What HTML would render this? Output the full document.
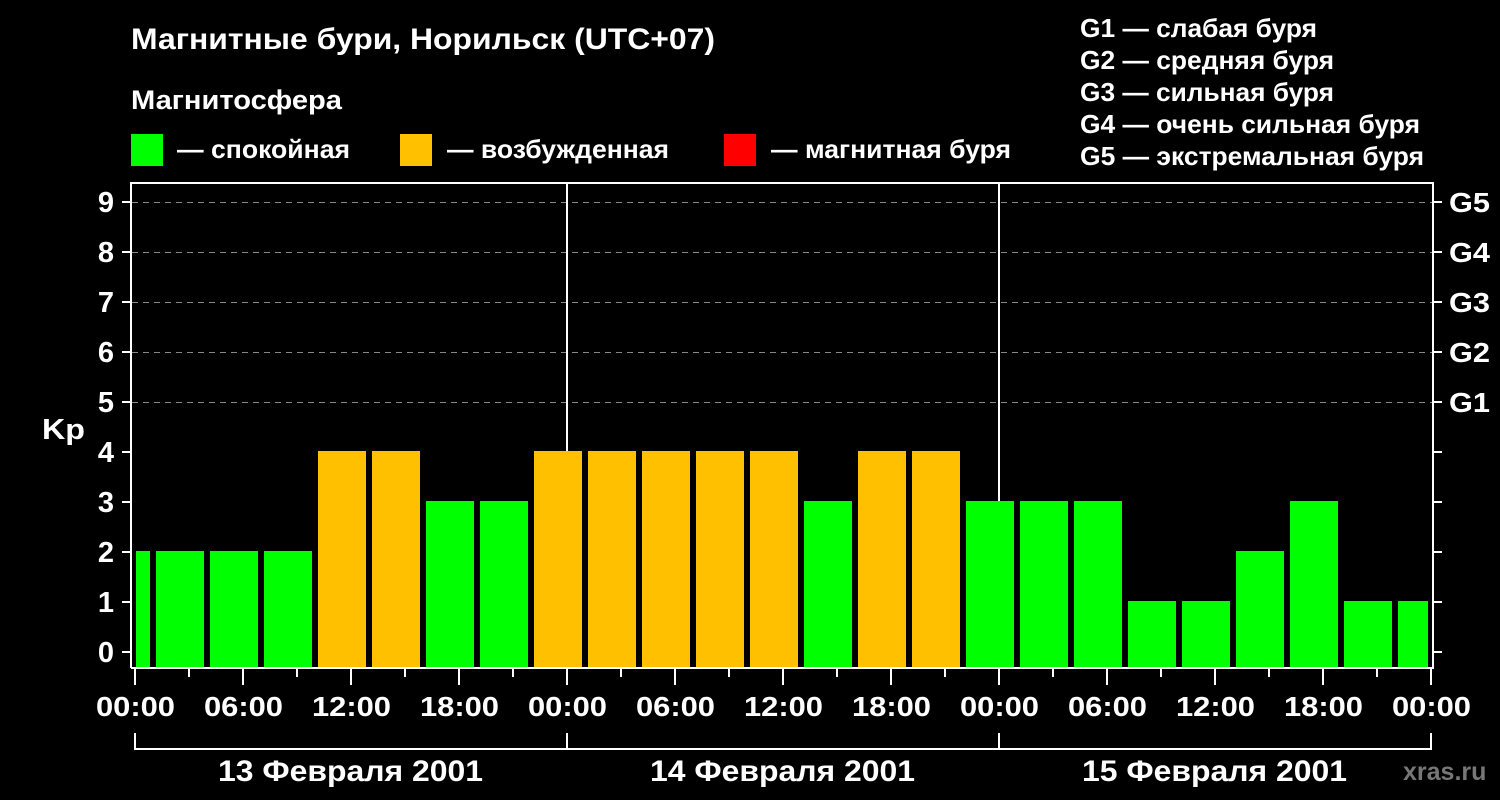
<!DOCTYPE html>
<html><head><meta charset="utf-8"><style>
html,body{margin:0;padding:0;background:#000;}
svg{display:block;font-family:"Liberation Sans",Arial,sans-serif;font-weight:bold;}
</style></head><body>
<svg width="1500" height="800" viewBox="0 0 1500 800" xmlns="http://www.w3.org/2000/svg">
<rect width="1500" height="800" fill="#000"/>
<g fill="#fff">
<text x="131" y="49" font-size="30" textLength="584" lengthAdjust="spacingAndGlyphs">Магнитные бури, Норильск (UTC+07)</text>
<text x="131" y="109" font-size="27" textLength="211" lengthAdjust="spacingAndGlyphs">Магнитосфера</text>
<text x="177" y="158" font-size="26" textLength="173" lengthAdjust="spacingAndGlyphs">— спокойная</text>
<text x="447" y="158" font-size="26" textLength="222" lengthAdjust="spacingAndGlyphs">— возбужденная</text>
<text x="771" y="158" font-size="26" textLength="240" lengthAdjust="spacingAndGlyphs">— магнитная буря</text>
<g font-size="26">
<text x="1080" y="37" textLength="237" lengthAdjust="spacingAndGlyphs">G1 — слабая буря</text>
<text x="1080" y="69" textLength="254" lengthAdjust="spacingAndGlyphs">G2 — средняя буря</text>
<text x="1080" y="101" textLength="254" lengthAdjust="spacingAndGlyphs">G3 — сильная буря</text>
<text x="1080" y="133" textLength="340" lengthAdjust="spacingAndGlyphs">G4 — очень сильная буря</text>
<text x="1080" y="165" textLength="344" lengthAdjust="spacingAndGlyphs">G5 — экстремальная буря</text>
</g>
</g>
<rect x="131" y="134" width="32" height="32" fill="#00ff00"/>
<rect x="400" y="134" width="32" height="32" fill="#ffc000"/>
<rect x="724" y="134" width="32" height="32" fill="#ff0000"/>
<g stroke="#888" stroke-width="1" stroke-dasharray="6,5">
<line x1="132" y1="202.5" x2="1432" y2="202.5"/>
<line x1="132" y1="252.5" x2="1432" y2="252.5"/>
<line x1="132" y1="302.5" x2="1432" y2="302.5"/>
<line x1="132" y1="352.5" x2="1432" y2="352.5"/>
<line x1="132" y1="402.5" x2="1432" y2="402.5"/>
</g>
<g>
<rect x="136" y="551" width="14" height="117" fill="#00ff00"/>
<rect x="156" y="551" width="48" height="117" fill="#00ff00"/>
<rect x="210" y="551" width="48" height="117" fill="#00ff00"/>
<rect x="264" y="551" width="48" height="117" fill="#00ff00"/>
<rect x="318" y="451" width="48" height="217" fill="#ffc000"/>
<rect x="372" y="451" width="48" height="217" fill="#ffc000"/>
<rect x="426" y="501" width="48" height="167" fill="#00ff00"/>
<rect x="480" y="501" width="48" height="167" fill="#00ff00"/>
<rect x="534" y="451" width="48" height="217" fill="#ffc000"/>
<rect x="588" y="451" width="48" height="217" fill="#ffc000"/>
<rect x="642" y="451" width="48" height="217" fill="#ffc000"/>
<rect x="696" y="451" width="48" height="217" fill="#ffc000"/>
<rect x="750" y="451" width="48" height="217" fill="#ffc000"/>
<rect x="804" y="501" width="48" height="167" fill="#00ff00"/>
<rect x="858" y="451" width="48" height="217" fill="#ffc000"/>
<rect x="912" y="451" width="48" height="217" fill="#ffc000"/>
<rect x="966" y="501" width="48" height="167" fill="#00ff00"/>
<rect x="1020" y="501" width="48" height="167" fill="#00ff00"/>
<rect x="1074" y="501" width="48" height="167" fill="#00ff00"/>
<rect x="1128" y="601" width="48" height="67" fill="#00ff00"/>
<rect x="1182" y="601" width="48" height="67" fill="#00ff00"/>
<rect x="1236" y="551" width="48" height="117" fill="#00ff00"/>
<rect x="1290" y="501" width="48" height="167" fill="#00ff00"/>
<rect x="1344" y="601" width="48" height="67" fill="#00ff00"/>
<rect x="1398" y="601" width="30" height="67" fill="#00ff00"/>
</g>
<g stroke="#fff" stroke-width="2">
<line x1="567" y1="183" x2="567" y2="451"/>
<line x1="999" y1="183" x2="999" y2="501"/>
</g>
<g stroke="#fff" stroke-width="2" fill="none">
<path d="M131 668 V183 H1433 V668 H131"/>
</g>
<g stroke="#fff" stroke-width="2">
<path d="M122 202H130M122 252H130M122 302H130M122 352H130M122 402H130M122 452H130M122 502H130M122 552H130M122 602H130M122 652H130"/>
<path d="M1434 202H1442M1434 252H1442M1434 302H1442M1434 352H1442M1434 402H1442M1434 452H1442M1434 502H1442M1434 552H1442M1434 602H1442M1434 652H1442"/>
<path d="M135 669V685M189 669V677M243 669V685M297 669V677M351 669V685M405 669V677M459 669V685M513 669V677M567 669V685M621 669V677M675 669V685M729 669V677M783 669V685M837 669V677M891 669V685M945 669V677M999 669V685M1053 669V677M1107 669V685M1161 669V677M1215 669V685M1269 669V677M1323 669V685M1377 669V677M1431 669V685"/>
<path d="M135 733V750M567 733V750M999 733V750M1431 733V750M135 749H1431"/>
</g>
<g fill="#fff" font-size="29" text-anchor="middle">
<text x="106" y="212">9</text><text x="106" y="262">8</text><text x="106" y="312">7</text><text x="106" y="362">6</text><text x="106" y="412">5</text><text x="106" y="462">4</text><text x="106" y="512">3</text><text x="106" y="562">2</text><text x="106" y="612">1</text><text x="106" y="662">0</text>
</g>
<text x="42" y="439" font-size="29" fill="#fff" textLength="43" lengthAdjust="spacingAndGlyphs">Kp</text>
<g fill="#fff" font-size="28">
<text x="1449" y="212" textLength="41" lengthAdjust="spacingAndGlyphs">G5</text><text x="1449" y="262" textLength="41" lengthAdjust="spacingAndGlyphs">G4</text><text x="1449" y="312" textLength="41" lengthAdjust="spacingAndGlyphs">G3</text><text x="1449" y="362" textLength="41" lengthAdjust="spacingAndGlyphs">G2</text><text x="1449" y="412" textLength="41" lengthAdjust="spacingAndGlyphs">G1</text>
</g>
<g fill="#fff" font-size="28">
<text x="96" y="716" textLength="79" lengthAdjust="spacingAndGlyphs">00:00</text><text x="204" y="716" textLength="79" lengthAdjust="spacingAndGlyphs">06:00</text><text x="312" y="716" textLength="79" lengthAdjust="spacingAndGlyphs">12:00</text><text x="420" y="716" textLength="79" lengthAdjust="spacingAndGlyphs">18:00</text>
<text x="528" y="716" textLength="79" lengthAdjust="spacingAndGlyphs">00:00</text><text x="636" y="716" textLength="79" lengthAdjust="spacingAndGlyphs">06:00</text><text x="744" y="716" textLength="79" lengthAdjust="spacingAndGlyphs">12:00</text><text x="852" y="716" textLength="79" lengthAdjust="spacingAndGlyphs">18:00</text>
<text x="960" y="716" textLength="79" lengthAdjust="spacingAndGlyphs">00:00</text><text x="1068" y="716" textLength="79" lengthAdjust="spacingAndGlyphs">06:00</text><text x="1176" y="716" textLength="79" lengthAdjust="spacingAndGlyphs">12:00</text><text x="1284" y="716" textLength="79" lengthAdjust="spacingAndGlyphs">18:00</text>
<text x="1392" y="716" textLength="79" lengthAdjust="spacingAndGlyphs">00:00</text>
</g>
<g fill="#fff" font-size="30">
<text x="218" y="781" textLength="265" lengthAdjust="spacingAndGlyphs">13 Февраля 2001</text>
<text x="650" y="781" textLength="265" lengthAdjust="spacingAndGlyphs">14 Февраля 2001</text>
<text x="1082" y="781" textLength="265" lengthAdjust="spacingAndGlyphs">15 Февраля 2001</text>
</g>
<text x="1403" y="780" font-size="25" fill="#777">xras.ru</text>
</svg>
</body></html>
